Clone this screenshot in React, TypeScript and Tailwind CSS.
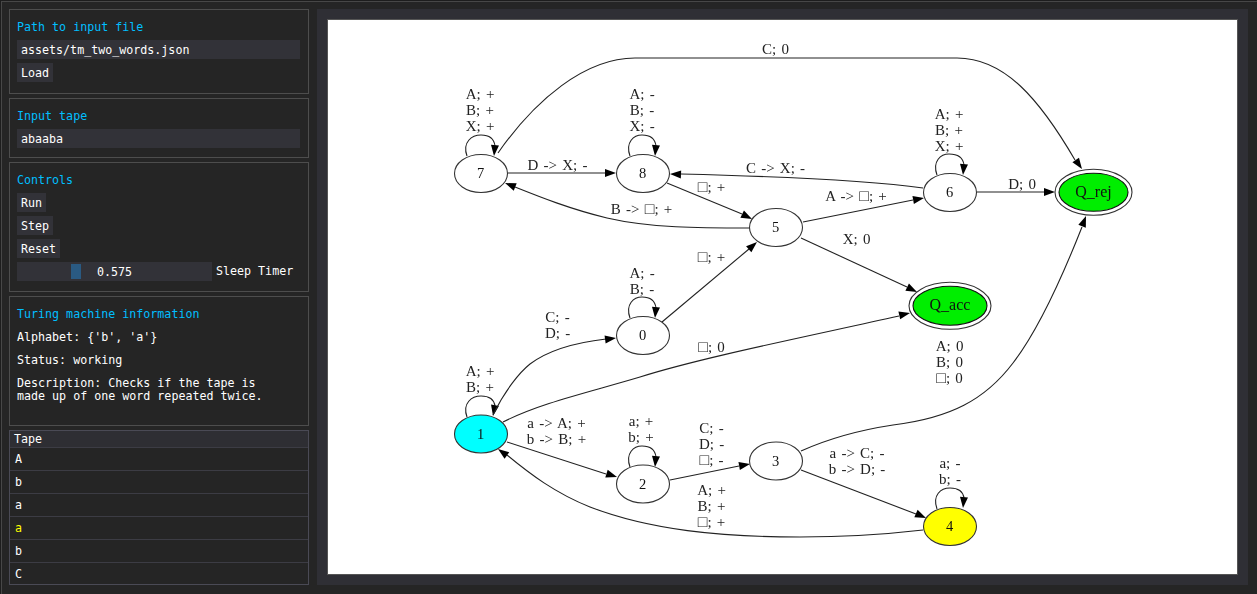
import React from "react";

const mono = { fontFamily: '"DejaVu Sans Mono", monospace' };

function Title({ children }: { children: React.ReactNode }) {
  return <div className="h-[13px] pt-px leading-[13px] text-[#00bfff]">{children}</div>;
}

function Field({ value }: { value: string }) {
  return <div className="h-[19px] w-[283px] bg-[#323238] px-[4px] pt-px leading-[19px] text-white">{value}</div>;
}

function Btn({ label }: { label: string }) {
  return <div className="h-[19px] w-fit bg-[#323238] px-[4px] pt-px leading-[19px] text-white">{label}</div>;
}

function arrowPoints(tip: [number, number], from: [number, number]) {
  const dx = tip[0] - from[0];
  const dy = tip[1] - from[1];
  const len = Math.hypot(dx, dy);
  const ux = dx / len;
  const uy = dy / len;
  const bx = tip[0] - ux * 11;
  const by = tip[1] - uy * 11;
  return `${tip[0]},${tip[1]} ${bx - uy * 4},${by + ux * 4} ${bx + uy * 4},${by - ux * 4}`;
}

// d stops at the arrow base, "from" only gives the arrow its direction
const edges: { d: string; tip: [number, number]; from: [number, number] }[] = [
  { d: "M467,156 C462,142 472,135 481,135 C489,135 494,138 495,146", tip: [494, 156], from: [495, 145] },
  { d: "M630,156 C625,142 634,135 642,135 C650,135 655,138 656,146", tip: [655, 156], from: [656, 145] },
  { d: "M630,318 C625,304 634,297 642,297 C650,297 655,300 656,308", tip: [655, 318], from: [656, 307] },
  { d: "M937,175 C932,161 941,154 949,154 C957,154 963,157 964,165", tip: [963, 175], from: [964, 164] },
  { d: "M937,509 C932,495 941,488 950,488 C958,488 963,491 964,498", tip: [963, 508], from: [964, 497] },
  { d: "M630,467 C625,453 634,446 642,446 C650,446 655,449 656,457", tip: [655, 467], from: [656, 456] },
  { d: "M467,417 C462,403 472,396 481,396 C489,396 494,399 495,406", tip: [493, 416], from: [495, 405] },
  { d: "M498,153 C535,100 585,58 635,58 L957,58 C1005,58 1040,100 1075,160", tip: [1082, 169], from: [1075, 159] },
  { d: "M508,173 L605,173", tip: [616, 173], from: [605, 173] },
  { d: "M750,228 C700,228 650,228 607,218 C570,209 540,197 515,187", tip: [505, 183], from: [515, 187] },
  { d: "M667,183 L742,214", tip: [752, 219], from: [742, 214] },
  { d: "M923,188 C880,182 800,177 681,174", tip: [670, 174], from: [681, 174.5] },
  { d: "M803,222 L913,200", tip: [924, 198], from: [913, 200] },
  { d: "M801,238 L907,287", tip: [917, 292], from: [907, 287] },
  { d: "M977,192 L1044,192", tip: [1055, 192], from: [1044, 192] },
  { d: "M662,322 L749,249", tip: [757, 242], from: [749, 249] },
  { d: "M493,415 C505,390 520,372 530,364 C550,349 580,342 606,339", tip: [616, 338], from: [605, 339.5] },
  { d: "M503,422 C540,403 590,392 640,377 C700,358 800,338 899,316", tip: [910, 313], from: [899, 315.5] },
  { d: "M507,442 L606,474", tip: [617, 477], from: [606, 473.5] },
  { d: "M670,480 L739,466", tip: [750, 464], from: [739, 466] },
  { d: "M801,451 C830,438 860,430 893,425 C950,418 985,400 1013,363 C1040,328 1065,270 1082,227", tip: [1086, 216], from: [1082, 226.5] },
  { d: "M801,470 L916,514", tip: [926, 518], from: [916, 513.5] },
  { d: "M923,530 C880,535 840,537 800,537 C720,537 650,530 590,507 C555,493 530,474 507,455", tip: [498, 449], from: [507, 455.5] },
];

const nodes: { n: string; x: number; y: number; fill: string }[] = [
  { n: "7", x: 481, y: 173.5, fill: "#ffffff" },
  { n: "8", x: 643, y: 173.5, fill: "#ffffff" },
  { n: "5", x: 776, y: 227.5, fill: "#ffffff" },
  { n: "6", x: 950, y: 192.5, fill: "#ffffff" },
  { n: "0", x: 643, y: 335.5, fill: "#ffffff" },
  { n: "1", x: 481, y: 434, fill: "#00ffff" },
  { n: "2", x: 643, y: 484, fill: "#ffffff" },
  { n: "3", x: 776, y: 461, fill: "#ffffff" },
  { n: "4", x: 950, y: 526.5, fill: "#ffff00" },
];

const labels: { x: number; y: number; lines: string[] }[] = [
  { x: 480, y: 99, lines: ["A; +", "B; +", "X; +"] },
  { x: 642, y: 99, lines: ["A; -", "B; -", "X; -"] },
  { x: 949, y: 118.5, lines: ["A; +", "B; +", "X; +"] },
  { x: 775.5, y: 54, lines: ["C; 0"] },
  { x: 557.5, y: 170, lines: ["D -> X; -"] },
  { x: 775.5, y: 173, lines: ["C -> X; -"] },
  { x: 711.5, y: 192, lines: ["□; +"] },
  { x: 856, y: 201, lines: ["A -> □; +"] },
  { x: 641.5, y: 214, lines: ["B -> □; +"] },
  { x: 1022, y: 189, lines: ["D; 0"] },
  { x: 856.5, y: 244, lines: ["X; 0"] },
  { x: 711.5, y: 262, lines: ["□; +"] },
  { x: 642, y: 278, lines: ["A; -", "B; -"] },
  { x: 557.5, y: 322, lines: ["C; -", "D; -"] },
  { x: 711.5, y: 352, lines: ["□; 0"] },
  { x: 949.5, y: 351, lines: ["A; 0", "B; 0", "□; 0"] },
  { x: 480, y: 376, lines: ["A; +", "B; +"] },
  { x: 556.5, y: 428, lines: ["a -> A; +", "b -> B; +"] },
  { x: 641, y: 426, lines: ["a; +", "b; +"] },
  { x: 711.5, y: 432.5, lines: ["C; -", "D; -", "□; -"] },
  { x: 857, y: 458, lines: ["a -> C; -", "b -> D; -"] },
  { x: 950, y: 468, lines: ["a; -", "b; -"] },
  { x: 711.5, y: 495, lines: ["A; +", "B; +", "□; +"] },
];

// the box glyph sits larger than the serif text around it
function LabelLine({ text, x, y }: { text: string; x: number; y: number }) {
  const parts = text.split("□");
  if (parts.length === 1) {
    return (
      <tspan x={x} y={y}>
        {text}
      </tspan>
    );
  }
  return (
    <tspan x={x} y={y}>
      {parts[0]}
      <tspan fontSize={16}>□</tspan>
      {parts[1]}
    </tspan>
  );
}

function Graph() {
  return (
    <svg viewBox="328 20 909 554" width={909} height={554} className="block bg-white blur-[0.3px]">
      {edges.map((e, i) => (
        <g key={i}>
          <path d={e.d} fill="none" stroke="#222222" strokeWidth={1.1} />
          <polygon points={arrowPoints(e.tip, e.from)} fill="#000000" />
        </g>
      ))}
      {nodes.map((n) => (
        <g key={n.n}>
          <ellipse cx={n.x} cy={n.y} rx={26.5} ry={19} fill={n.fill} stroke="#333333" strokeWidth={1.1} />
          <text x={n.x - 0.5} y={n.y + 4.5} textAnchor="middle" fontSize={14.5} fill="#111111">
            {n.n}
          </text>
        </g>
      ))}
      <ellipse cx={1093.5} cy={192.3} rx={38.5} ry={23} fill="#ffffff" stroke="#333333" strokeWidth={1.1} />
      <ellipse cx={1093.5} cy={192.3} rx={34.5} ry={19} fill="#00ee00" stroke="#111111" strokeWidth={1.1} />
      <text x={1093.5} y={196.5} textAnchor="middle" fontSize={16} fill="#111111">Q_rej</text>
      <ellipse cx={950} cy={305.8} rx={41} ry={23.5} fill="#ffffff" stroke="#333333" strokeWidth={1.1} />
      <ellipse cx={950} cy={305.8} rx={37} ry={19.5} fill="#00ee00" stroke="#111111" strokeWidth={1.1} />
      <text x={950} y={310} textAnchor="middle" fontSize={16} fill="#111111">Q_acc</text>
      {labels.map((l, i) => (
        <text key={i} textAnchor="middle" fontSize={15} wordSpacing={1.5} fill="#222222">
          {l.lines.map((t, j) => (
            <LabelLine key={j} text={t} x={l.x} y={l.y + j * 16} />
          ))}
        </text>
      ))}
    </svg>
  );
}

const tape = ["A", "b", "a", "a", "b", "C"];

export default function App() {
  return (
    <div className="h-[594px] w-[1257px] overflow-hidden bg-[#1d1d1d] pl-px pt-px text-[11.67px]" style={mono}>
      <div className="flex h-[593px] gap-[8px] border-l border-t border-[#474747] bg-[#252525] pl-[7px] pt-[7px]">
        <div className="flex w-[300px] shrink-0 flex-col gap-[4px]">
          <div className="h-[85px] border border-[#4d4d4d] px-[7px] pt-[10px]">
            <Title>Path to input file</Title>
            <div className="mt-[7px] flex flex-col gap-[4px]">
              <Field value="assets/tm_two_words.json" />
              <Btn label="Load" />
            </div>
          </div>
          <div className="h-[60px] border border-[#4d4d4d] px-[7px] pt-[10px]">
            <Title>Input tape</Title>
            <div className="mt-[7px]">
              <Field value="abaaba" />
            </div>
          </div>
          <div className="h-[130px] border border-[#4d4d4d] px-[7px] pt-[10px]">
            <Title>Controls</Title>
            <div className="mt-[7px] flex flex-col gap-[4px]">
              <Btn label="Run" />
              <Btn label="Step" />
              <Btn label="Reset" />
              <div className="flex items-center gap-[4px] text-white">
                <div className="relative h-[19px] w-[195px] bg-[#323238] pt-px text-center leading-[19px]">
                  <div className="absolute left-[54px] top-[2px] h-[15px] w-[10px] bg-[#2a5a82]" />
                  <span className="relative">0.575</span>
                </div>
                <span className="pt-px">Sleep Timer</span>
              </div>
            </div>
          </div>
          <div className="h-[130px] border border-[#4d4d4d] px-[7px] pt-[10px] text-white">
            <Title>Turing machine information</Title>
            <div className="mt-[10px] h-[13px] pt-px leading-[13px]">Alphabet: {"{'b', 'a'}"}</div>
            <div className="mt-[10px] h-[13px] pt-px leading-[13px]">Status: working</div>
            <div className="mt-[10px] pt-px leading-[13px]">
              Description: Checks if the tape is
              <br />
              made up of one word repeated twice.
            </div>
          </div>
          <div className="h-[155px] border border-[#4a4a55] text-white">
            <div className="h-[16px] bg-[#2e2e33] pl-[4px] leading-[16px]">Tape</div>
            {tape.map((t, i) => (
              <div
                key={i}
                className={`h-[23px] border-t border-[#3c3c44] pl-[5px] leading-[22px] ${i === 3 ? "text-[#ffff00]" : "text-white"}`}
              >
                {t}
              </div>
            ))}
          </div>
        </div>
        <div className="h-[576px] w-[931px] bg-[#2f2f35] p-[10px]">
          <div className="w-fit border border-[#555555]" style={{ fontFamily: '"Liberation Serif", "DejaVu Sans", serif' }}>
            <Graph />
          </div>
        </div>
      </div>
    </div>
  );
}
